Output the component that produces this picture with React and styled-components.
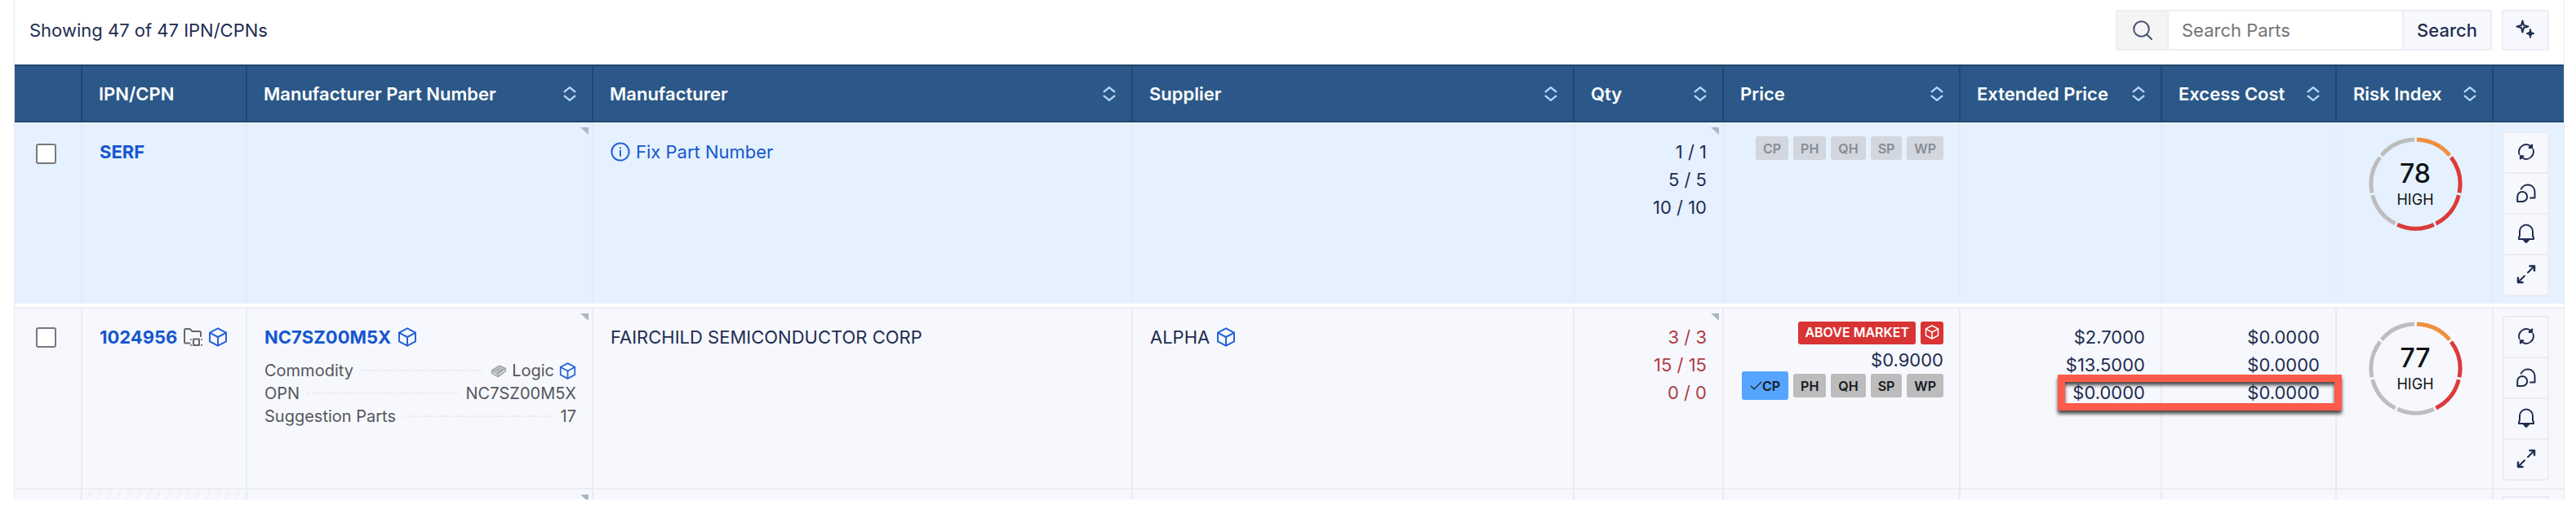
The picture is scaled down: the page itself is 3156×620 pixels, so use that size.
import * as React from 'react';
import styled, { createGlobalStyle } from 'styled-components';

const GlobalStyle = createGlobalStyle`
  *, *::before, *::after {
    box-sizing: border-box;
  }
  body {
    margin: 0;
    background: #ffffff;
    color: #1f2d50;
    font-family: Inter, 'Liberation Sans', sans-serif;
    font-size: 22px;
    line-height: 34px;
  }
  button, input {
    font: inherit;
    color: inherit;
  }
`;

const StyledPanel = styled.main`
  margin: 0 14px 0 17px;
  border-left: 1px solid #e9eaf0;
  border-right: 1px solid #e9eaf0;
`;

const StyledToolbar = styled.header`
  display: flex;
  align-items: center;
  gap: 12px;
  padding: 12px 18px 17px;
`;

const StyledCount = styled.span`
  flex: 1;
`;

const StyledSearchForm = styled.form`
  display: flex;
  height: 50px;
  border: 2px solid #eceef4;
  border-radius: 3px;
`;

const StyledSearchLabel = styled.label`
  display: flex;
  align-items: center;
  justify-content: center;
  width: 63px;
  background: #f4f4f5;
  border-right: 2px solid #eceef4;
`;

const StyledSearchInput = styled.input`
  width: 286px;
  padding: 0 16px;
  border: none;
  outline: none;
  background: #ffffff;

  &::placeholder {
    color: #757575;
    opacity: 1;
  }
`;

const StyledSearchButton = styled.button`
  width: 108px;
  padding: 0;
  border: none;
  border-left: 2px solid #eceef4;
  background: #f6f8fd;
  font-weight: 500;
  cursor: pointer;
`;

const StyledSquareButton = styled.button`
  display: flex;
  align-items: center;
  justify-content: center;
  width: 58px;
  height: 50px;
  padding: 0 0 4px;
  border: 2px solid #eceef4;
  border-radius: 3px;
  background: #f6f8fd;
  cursor: pointer;
`;

const StyledTable = styled.table`
  width: 100%;
  table-layout: fixed;
  border-collapse: separate;
  border-spacing: 0;
`;

const StyledHeadCell = styled.th`
  height: 71px;
  padding: 0 18px 0 20px;
  background: #2b5888;
  border-top: 2px solid #24466f;
  border-bottom: 2px solid #24466f;
  border-right: 2px solid #24466f;
  color: #ffffff;
  font-weight: 600;
  text-align: left;
  white-space: nowrap;

  &:last-child {
    border-right: none;
  }
`;

const StyledHeadContent = styled.div`
  display: flex;
  align-items: center;
  justify-content: space-between;
`;

const StyledSortButton = styled.button`
  display: flex;
  padding: 0;
  border: none;
  background: none;
  color: #b9d6ff;
  cursor: pointer;
`;

const StyledRow = styled.tr`
  background: ${(props) => (props.$selected ? '#e5f1fe' : '#f6f8fd')};
`;

const StyledGapCell = styled.td`
  height: 4px;
  padding: 0;
  background: #ffffff;
`;

const StyledCell = styled.td`
  position: relative;
  height: ${(props) => (props.$peek ? '14px' : 'auto')};
  padding: ${(props) => (props.$peek ? '0' : `${props.$flush ? 19 : 18}px 19px 0 21px`)};
  border-top: ${(props) => (props.$flush ? 'none' : '2px solid #eceef3')};
  border-right: 2px solid #eaebf2;
  text-align: ${(props) => props.$align || 'left'};
  vertical-align: top;
  white-space: nowrap;

  &:last-child {
    border-right: none;
  }
`;

const StyledRiskCell = styled(StyledCell)`
  padding: ${(props) => (props.$flush ? '18px' : '16px')} 0 0 2px;
  text-align: center;
`;

const StyledCheckCell = styled(StyledCell)`
  padding: ${(props) => (props.$flush ? '26px' : '23px')} 26px 0;
`;

const StyledActionCell = styled(StyledCell)`
  padding: ${(props) => (props.$flush ? '11px 18px 9px 11px' : '9px 18px 9px 11px')};
`;

const StyledPeekAction = styled.div`
  height: 4px;
  margin: 8px 18px 0 11px;
  border: 2px solid #e9ebf1;
  border-bottom: none;
`;

const StyledHatchedCell = styled(StyledCell)`
  background: repeating-linear-gradient(115deg, #f6f8fd 0 9px, #eff1f4 9px 11px);
`;

const StyledCheckbox = styled.input`
  appearance: none;
  display: block;
  width: 25px;
  height: 25px;
  margin: 0;
  border: 2px solid #77797e;
  border-radius: 3px;
  background: #ffffff;

  &:checked {
    background: #1557cf;
  }
`;

const StyledCorner = styled.span`
  position: absolute;
  top: 6px;
  right: 4px;
  width: 10px;
  height: 9px;
  background: #a9b9c3;
  clip-path: polygon(0 0, 100% 0, 100% 100%);
`;

const StyledLine = styled.div`
  display: flex;
  align-items: center;
  gap: ${(props) => props.$gap || '8px'};
`;

const StyledLink = styled.a`
  display: inline-flex;
  align-items: center;
  gap: 7px;
  color: #1557cf;
  font-weight: ${(props) => (props.$bold ? 700 : 400)};
  text-decoration: none;
`;

const StyledIcon = styled.svg`
  flex: none;
  display: block;
  width: ${(props) => props.$size || 24}px;
  height: ${(props) => props.$size || 24}px;
  color: ${(props) => props.$color || 'inherit'};
`;

const StyledDetails = styled.dl`
  margin: 10px 0 0;
  color: #55575c;
  font-size: 20px;
  line-height: 28px;
`;

const StyledDetail = styled.div`
  display: flex;
  align-items: center;
  gap: 10px;

  dt {
    order: 0;
  }
  dd {
    order: 2;
    display: flex;
    align-items: center;
    gap: 6px;
    margin: 0;
  }
  &::after {
    content: '';
    order: 1;
    flex: 1;
    border-top: 2px dotted #e6e8ec;
  }
`;

const StyledAmounts = styled.div`
  color: ${(props) => (props.$short ? '#b23a44' : 'inherit')};
`;

const StyledPrice = styled.div`
  display: flex;
  flex-direction: column;
  align-items: flex-end;
  margin-top: -2px;
`;

const StyledPriceAmount = styled.div`
  margin-top: 5px;
  line-height: 28px;
`;

const StyledBadge = styled.span`
  display: flex;
  align-items: center;
  justify-content: center;
  height: 28px;
  padding: 0 ${(props) => (props.$icon ? '5px' : '8px')} 2px;
  border-radius: 3px;
  background: #d93434;
  color: #ffffff;
  font-size: 16px;
  font-weight: 600;
  line-height: 20px;
`;

const StyledChip = styled.button`
  display: flex;
  align-items: center;
  justify-content: center;
  height: ${(props) => (props.$active ? '35px' : '29px')};
  padding: 0 ${(props) => (props.$active ? '10px' : '9px')};
  border: none;
  border-radius: 3px;
  background: ${(props) => (props.$active ? '#55a4ff' : '#bcbcbc')};
  color: #17191d;
  font-size: 16px;
  font-weight: 600;
  line-height: 20px;
  cursor: pointer;

  &:disabled {
    background: #d1d6df;
    color: #878c94;
    cursor: default;
  }
`;

const StyledGauge = styled.div`
  display: inline-grid;
  place-items: center;

  > * {
    grid-area: 1 / 1;
  }
`;

const StyledScore = styled.div`
  color: #101216;
  font-size: 18px;
  font-weight: 400;
  line-height: 26px;
  text-align: center;

  strong {
    display: block;
    font-size: 32px;
    font-weight: 500;
    line-height: 38px;
  }
`;

const StyledActions = styled.div`
  display: flex;
  flex-direction: column;
  border: 2px solid #ebedf3;
  border-radius: 3px;
  background: #f6f8fd;
`;

const StyledAction = styled.button`
  display: flex;
  align-items: center;
  justify-content: center;
  height: 50px;
  padding: 0 0 3px;
  border: none;
  border-bottom: 2px solid #ebedf3;
  background: none;
  cursor: pointer;

  &:last-child {
    height: 48px;
    border-bottom: none;
  }
`;

// sits over the third line of the two cost columns
const StyledHighlight = styled.span`
  position: absolute;
  top: 81px;
  right: -8px;
  width: 348px;
  height: 44px;
  border: 9px solid #ff5a4a;
  filter: drop-shadow(0 4px 2px rgba(30, 30, 30, 0.8));
  pointer-events: none;
  z-index: 1;
`;

const Icon = ({ size, color, width = 2, children }) => (
  <StyledIcon
    $size={size}
    $color={color}
    viewBox="0 0 24 24"
    fill="none"
    stroke="currentColor"
    strokeWidth={width}
    strokeLinecap="round"
    strokeLinejoin="round"
    aria-hidden="true"
  >
    {children}
  </StyledIcon>
);

const CubeIcon = ({ size = 24, color = '#2563d4' }) => (
  <Icon size={size} color={color}>
    <path d="M12 1.3 22 6.6V17.4L12 22.7 2 17.4V6.6Z" />
    <path d="M2.3 6.8 12 12 21.7 6.8M12 12V22.4" />
  </Icon>
);

const FolderIcon = () => (
  <Icon size={24} color="#66686d">
    <path d="M8.5 19.5H3.5Q2 19.5 2 18V3.5Q2 2 3.5 2H8.5L11.5 5H20.5Q22 5 22 6.5V11" />
    <path d="M13 14.5H20V22H13Z" />
    <path d="M10 15V15.1M10 21.8V21.9M23 15V15.1M23 21.8V21.9" />
  </Icon>
);

const ChipIcon = () => (
  <Icon size={20} color="#a3a5a8" width={2}>
    <path d="M2 12 13 5 22 9 11 17Z" fill="#c9cacd" />
    <path d="M2 12V16L11 21V17M11 21 22 13V9" />
    <path d="M8 12 13 9M12 14 17 10" />
  </Icon>
);

const InfoIcon = () => (
  <Icon size={24} color="#2563d4">
    <circle cx="12" cy="12" r="10.6" />
    <path d="M12 10.5V17M12 7V7.2" />
  </Icon>
);

const CheckIcon = () => (
  <Icon size={15} width={2}>
    <path d="M2 13 8 19 22 5" />
  </Icon>
);

const SortIcon = () => (
  <Icon size={18} width={3}>
    <path d="M3.5 8.5 12 1.5 20.5 8.5M3.5 15.5 12 22.5 20.5 15.5" />
  </Icon>
);

const SearchIcon = () => (
  <Icon size={24} color="#46526f">
    <circle cx="10.5" cy="10.5" r="9.3" />
    <path d="M17.3 17.3 23 23" />
  </Icon>
);

const SparkleIcon = () => (
  <Icon size={24}>
    <path d="M8.5 2.5 10 8 15.5 9.5 10 11 8.5 16.5 7 11 1.5 9.5 7 8Z" />
    <path d="M18 12.5 19.4 16.6 23 18 19.4 19.4 18 23.5 16.6 19.4 13 18 16.6 16.6Z" fill="currentColor" strokeWidth="1" />
  </Icon>
);

const RefreshIcon = () => (
  <Icon size={22}>
    <path d="M2.9 15.5A9.8 9.8 0 0 1 17.5 4M21.1 8.5A9.8 9.8 0 0 1 6.5 20" />
    <path d="M19.8 2.5V6.5H15.8ZM4.2 21.5V17.5H8.2Z" fill="currentColor" />
  </Icon>
);

const ChatIcon = () => (
  <Icon size={24}>
    <path d="M5.7 7.7A8.8 8.8 0 0 1 22.5 10.5V18.5H17" />
    <path d="M1.2 23V17A6 6 0 1 1 7.2 23Z" />
  </Icon>
);

const BellIcon = () => (
  <Icon size={24}>
    <path d="M3 19V17L4 15V9.5A8 8 0 0 1 20 9.5V15L21 17V19Z" />
    <path d="M9 20 12 23 15 20Z" fill="currentColor" />
  </Icon>
);

const ExpandIcon = () => (
  <Icon size={24}>
    <path d="M14 10 21.5 2.5M10 14 2.5 21.5" />
    <path d="M16.5 2H22V7.5M2 16.5V22H7.5" strokeWidth="2.5" />
  </Icon>
);

const COLUMNS = [
  { id: 'select', label: '', width: '83px' },
  { id: 'ipn', label: 'IPN/CPN', width: '202px' },
  { id: 'mpn', label: 'Manufacturer Part Number', width: '424px', sortable: true },
  { id: 'manufacturer', label: 'Manufacturer', sortable: true },
  { id: 'supplier', label: 'Supplier', width: '541px', sortable: true },
  { id: 'qty', label: 'Qty', width: '183px', sortable: true },
  { id: 'price', label: 'Price', width: '290px', sortable: true },
  { id: 'extended', label: 'Extended Price', width: '247px', sortable: true },
  { id: 'excess', label: 'Excess Cost', width: '214px', sortable: true },
  { id: 'risk', label: 'Risk Index', width: '192px', sortable: true },
  { id: 'actions', label: '', width: '86px' },
];

const PRICE_TYPES = ['CP', 'PH', 'QH', 'SP', 'WP'];

const ORANGE = '#ee9040';
const RED = '#dc3a3a';
const GREY = '#bdbdbd';

const PARTS = [
  {
    ipn: 'SERF',
    selected: true,
    qty: ['1 / 1', '5 / 5', '10 / 10'],
    extended: [],
    excess: [],
    score: 78,
    segments: [ORANGE, RED, RED, RED, GREY, GREY, GREY],
  },
  {
    ipn: '1024956',
    mpn: 'NC7SZ00M5X',
    manufacturer: 'FAIRCHILD SEMICONDUCTOR CORP',
    supplier: 'ALPHA',
    qty: ['3 / 3', '15 / 15', '0 / 0'],
    short: true,
    price: '$0.9000',
    market: 'ABOVE MARKET',
    priceType: 'CP',
    extended: ['$2.7000', '$13.5000', '$0.0000'],
    excess: ['$0.0000', '$0.0000', '$0.0000'],
    highlighted: true,
    score: 77,
    segments: [ORANGE, RED, RED, GREY, GREY, GREY, GREY],
  },
];

const ACTIONS = [
  { label: 'Refresh', Glyph: RefreshIcon },
  { label: 'Comments', Glyph: ChatIcon },
  { label: 'Alerts', Glyph: BellIcon },
  { label: 'Expand', Glyph: ExpandIcon },
];

const SearchForm = ({ value, onChange }) => (
  <StyledSearchForm onSubmit={(event) => event.preventDefault()}>
    <StyledSearchLabel htmlFor="search" aria-label="Search parts">
      <SearchIcon />
    </StyledSearchLabel>
    <StyledSearchInput
      id="search"
      type="text"
      placeholder="Search Parts"
      value={value}
      onChange={(event) => onChange(event.target.value)}
    />
    <StyledSearchButton type="submit">Search</StyledSearchButton>
  </StyledSearchForm>
);

const Gauge = ({ score, segments }) => {
  const radius = 55;
  const length = (2 * Math.PI * radius) / segments.length;
  return (
    <StyledGauge>
      <svg width="115" height="115" viewBox="-58 -58 116 116" fill="none" aria-hidden="true">
        {segments.map((color, index) => (
          <circle
            key={index}
            r={radius}
            stroke={color}
            strokeWidth="5"
            strokeDasharray={`${length - 3} ${length * segments.length}`}
            transform={`rotate(${-88.5 + (index * 360) / segments.length})`}
          />
        ))}
      </svg>
      <StyledScore>
        <strong>{score}</strong>
        HIGH
      </StyledScore>
    </StyledGauge>
  );
};

const Amounts = ({ values, short }) => (
  <StyledAmounts $short={short}>
    {values.map((value, index) => (
      <div key={index}>{value}</div>
    ))}
  </StyledAmounts>
);

const Price = ({ item }) => (
  <StyledPrice>
    {item.market && (
      <StyledLine $gap="6px">
        <StyledBadge>{item.market}</StyledBadge>
        <StyledBadge $icon>
          <CubeIcon size={18} color="#ffffff" />
        </StyledBadge>
      </StyledLine>
    )}
    {item.price && <StyledPriceAmount>{item.price}</StyledPriceAmount>}
    <StyledLine $gap="6px">
      {PRICE_TYPES.map((type) => (
        <StyledChip
          key={type}
          type="button"
          disabled={!item.price}
          $active={item.priceType === type}
        >
          {item.priceType === type && <CheckIcon />}
          {type}
        </StyledChip>
      ))}
    </StyledLine>
  </StyledPrice>
);

const Part = ({ item, flush }) => {
  const [checked, setChecked] = React.useState(false);

  return (
    <StyledRow $selected={item.selected}>
      <StyledCheckCell $flush={flush}>
        <StyledCheckbox
          type="checkbox"
          aria-label={`Select ${item.ipn}`}
          checked={checked}
          onChange={() => setChecked(!checked)}
        />
      </StyledCheckCell>
      <StyledCell $flush={flush}>
        <StyledLine $gap="7px">
          <StyledLink $bold href={`#${item.ipn}`}>{item.ipn}</StyledLink>
          {item.mpn && <FolderIcon />}
          {item.mpn && <CubeIcon />}
        </StyledLine>
      </StyledCell>
      <StyledCell $flush={flush}>
        <StyledCorner />
        {item.mpn && (
          <>
            <StyledLine>
              <StyledLink $bold href={`#${item.mpn}`}>{item.mpn}</StyledLink>
              <CubeIcon />
            </StyledLine>
            <StyledDetails>
              <StyledDetail>
                <dt>Commodity</dt>
                <dd><ChipIcon /> Logic <CubeIcon size={21} /></dd>
              </StyledDetail>
              <StyledDetail>
                <dt>OPN</dt>
                <dd>{item.mpn}</dd>
              </StyledDetail>
              <StyledDetail>
                <dt>Suggestion Parts</dt>
                <dd>17</dd>
              </StyledDetail>
            </StyledDetails>
          </>
        )}
      </StyledCell>
      <StyledCell $flush={flush}>
        {item.manufacturer || (
          <StyledLink href="#fix"><InfoIcon /> Fix Part Number</StyledLink>
        )}
      </StyledCell>
      <StyledCell $flush={flush}>
        {item.supplier && <StyledLine>{item.supplier} <CubeIcon /></StyledLine>}
      </StyledCell>
      <StyledCell $flush={flush} $align="right">
        <StyledCorner />
        <Amounts values={item.qty} short={item.short} />
      </StyledCell>
      <StyledCell $flush={flush}>
        <Price item={item} />
      </StyledCell>
      <StyledCell $flush={flush} $align="right">
        <Amounts values={item.extended} />
      </StyledCell>
      <StyledCell $flush={flush} $align="right">
        <Amounts values={item.excess} />
        {item.highlighted && <StyledHighlight />}
      </StyledCell>
      <StyledRiskCell $flush={flush}>
        <Gauge score={item.score} segments={item.segments} />
      </StyledRiskCell>
      <StyledActionCell $flush={flush}>
        <StyledActions>
          {ACTIONS.map(({ label, Glyph }) => (
            <StyledAction key={label} type="button" aria-label={label}>
              <Glyph />
            </StyledAction>
          ))}
        </StyledActions>
      </StyledActionCell>
    </StyledRow>
  );
};

// top edge of the next row
const PeekRow = () => (
  <StyledRow>
    {COLUMNS.map(({ id }) => {
      if (id === 'ipn') return <StyledHatchedCell key={id} $peek />;
      return (
        <StyledCell key={id} $peek>
          {id === 'mpn' && <StyledCorner />}
          {id === 'actions' && <StyledPeekAction />}
        </StyledCell>
      );
    })}
  </StyledRow>
);

const App = () => {
  const [searchTerm, setSearchTerm] = React.useState('');

  return (
    <>
      <GlobalStyle />
      <StyledPanel>
        <StyledToolbar>
          <StyledCount>Showing 47 of 47 IPN/CPNs</StyledCount>
          <SearchForm value={searchTerm} onChange={setSearchTerm} />
          <StyledSquareButton type="button" aria-label="Suggestions">
            <SparkleIcon />
          </StyledSquareButton>
        </StyledToolbar>
        <StyledTable>
          <colgroup>
            {COLUMNS.map(({ id, width }) => <col key={id} width={width} />)}
          </colgroup>
          <thead>
            <tr>
              {COLUMNS.map(({ id, label, sortable }) => (
                <StyledHeadCell key={id}>
                  <StyledHeadContent>
                    {label}
                    {sortable && (
                      <StyledSortButton type="button" aria-label={`Sort by ${label}`}>
                        <SortIcon />
                      </StyledSortButton>
                    )}
                  </StyledHeadContent>
                </StyledHeadCell>
              ))}
            </tr>
          </thead>
          <tbody>
            <Part item={PARTS[0]} flush />
            <tr><StyledGapCell colSpan={COLUMNS.length} /></tr>
            <Part item={PARTS[1]} />
            <PeekRow />
          </tbody>
        </StyledTable>
      </StyledPanel>
    </>
  );
};

export default App;
